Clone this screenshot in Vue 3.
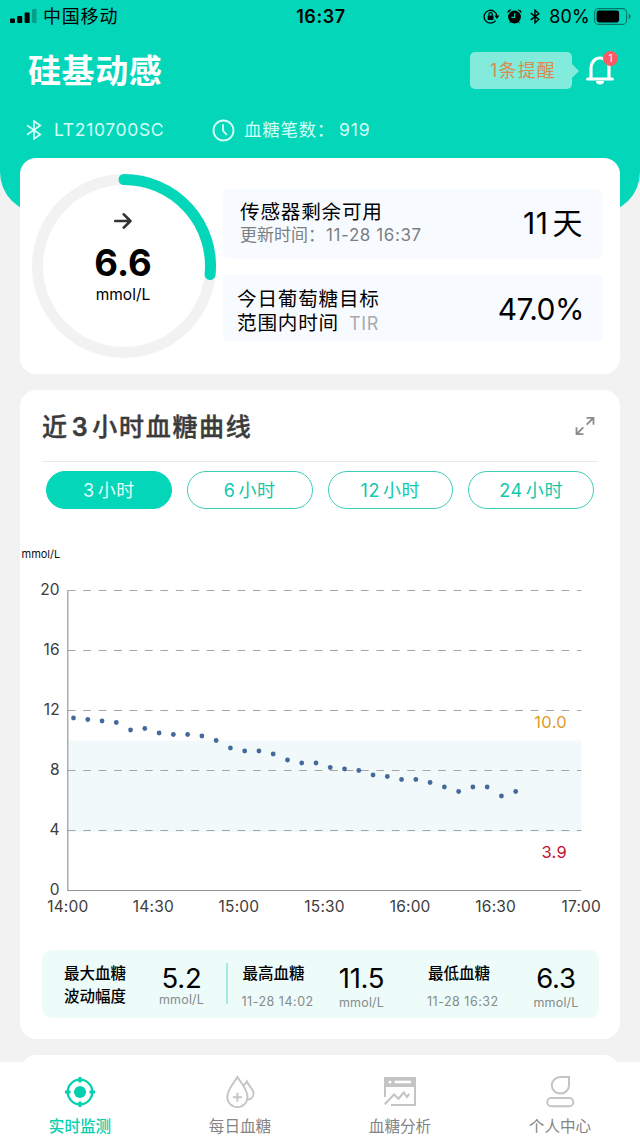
<template>
    <div class="screen">
        <header class="header">
            <div class="status">
                <div class="carrier">
                    <svg width="27" height="14" viewBox="0 0 27 14">
                        <rect x="0" y="9.5" width="5" height="4.5" rx="1" />
                        <rect x="7.2" y="7" width="5" height="7" rx="1" />
                        <rect x="14.6" y="3.4" width="5" height="10.6" rx="1" />
                        <rect x="22" y="0" width="4.6" height="14" rx="1" opacity=".25" />
                    </svg>
                    <span>中国移动</span>
                </div>
                <div class="clock">16:37</div>
                <div class="indicators">
                    <svg class="lock" width="17" height="15" viewBox="0 0 17 15">
                        <path d="M12.6 11.6A6.4 6.4 0 1 1 13.9 7" fill="none" stroke="#000" stroke-width="1.3" />
                        <path d="M11.4 6.6h5l-2.5 3.4z" />
                        <rect x="4.7" y="6.5" width="5.8" height="4.4" rx=".6" />
                        <path d="M5.9 6.8V5.3a1.7 1.7 0 0 1 3.4 0v1.5" fill="none" stroke="#000" stroke-width="1.1" />
                    </svg>
                    <svg class="alarm" width="15" height="15" viewBox="0 0 15 15">
                        <circle cx="7.5" cy="8" r="6.4" />
                        <path d="M.6 4.3A3 3 0 0 1 4.5.7zM14.4 4.3A3 3 0 0 0 10.5.7zM1.8 14.8l2-3h2zM13.2 14.8l-2-3h-2z" />
                        <path d="M7.7 4.2v4.1H4.3" fill="none" stroke="#04d6b9" stroke-width="1.2" />
                    </svg>
                    <svg class="bt" width="10" height="15" viewBox="0 0 10 15">
                        <path d="M.8 4.1l8 6.3L5 13.8V1.2l3.8 3.4-8 6.3" fill="none" stroke="#000" stroke-width="1.4" />
                    </svg>
                    <span class="percent">80%</span>
                    <svg width="38" height="17" viewBox="0 0 38 17">
                        <rect x=".6" y=".6" width="32" height="15.8" rx="4" fill="none" stroke="#000" stroke-opacity=".45" stroke-width="1.1" />
                        <rect x="2.6" y="2.6" width="22.5" height="11.8" rx="2.3" />
                        <path d="M34.7 5.8v5.4q2-.8 2-2.7t-2-2.7z" opacity=".45" />
                    </svg>
                </div>
            </div>
            <div class="brand-row">
                <h1 class="brand">硅基动感</h1>
                <div class="notice">
                    <span class="bubble">1条提醒</span>
                    <div class="bell">
                        <svg width="28" height="31" viewBox="0 0 28 31">
                            <path d="M5 24V12.5a9 9.5 0 0 1 18 0V24" fill="none" stroke="#fff" stroke-width="3.2" />
                            <path d="M1.5 24h25" stroke="#fff" stroke-width="3" stroke-linecap="round" />
                            <path d="M10 26h8a4 3.6 0 0 1-8 0z" fill="#fff" />
                        </svg>
                        <span class="badge">1</span>
                    </div>
                </div>
            </div>
            <div class="device">
                <svg width="16" height="20" viewBox="0 0 16 20">
                    <path d="M1 5.2l13.3 9.3-6.3 4.5V1l6.3 4.5L1 14.8" fill="none" stroke="#d4fff8" stroke-width="1.7" />
                </svg>
                <span class="serial">LT210700SC</span>
                <svg width="23" height="23" viewBox="0 0 23 23">
                    <circle cx="11.5" cy="11.5" r="10" fill="none" stroke="#d4fff8" stroke-width="1.9" />
                    <path d="M11 5.3v6.4l3.8 4.3" fill="none" stroke="#d4fff8" stroke-width="1.8" />
                </svg>
                <span class="count">血糖笔数：<span class="num">919</span></span>
            </div>
        </header>

        <main class="content">
            <section class="card summary">
                <div class="gauge">
                    <svg width="184" height="184" viewBox="0 0 184 184">
                        <circle cx="92" cy="92" r="86.5" fill="none" stroke="#f2f2f2" stroke-width="11" />
                        <path :d="gaugeArc" fill="none" stroke="#04d6b9" stroke-width="11" stroke-linecap="round" />
                    </svg>
                    <div class="reading">
                        <svg width="18" height="16" viewBox="0 0 18 16">
                            <path d="M1.3 8h15M9.8 1.4L16.4 8l-6.6 6.6" fill="none" stroke="#333" stroke-width="2.7" stroke-linecap="round" stroke-linejoin="round" />
                        </svg>
                        <strong>6.6</strong>
                        <span>mmol/L</span>
                    </div>
                </div>
                <div class="tiles">
                    <div class="tile">
                        <div>
                            <p class="tile-title">传感器剩余可用</p>
                            <p class="tile-sub">更新时间：<span>11-28 16:37</span></p>
                        </div>
                        <div class="tile-value days">11<span>天</span></div>
                    </div>
                    <div class="tile target">
                        <div>
                            <p class="tile-title">今日葡萄糖目标</p>
                            <p class="tile-title">范围内时间<span class="tir">TIR</span></p>
                        </div>
                        <div class="tile-value">47.0%</div>
                    </div>
                </div>
            </section>

            <section class="card curve">
                <div class="curve-head">
                    <h2>近<span>{{ activeHours }}</span>小时血糖曲线</h2>
                    <svg width="20" height="20" viewBox="0 0 20 20">
                        <path d="M11.5 1.8h7v7M18.3 2l-6.6 6.6M1.5 11.2v7h7M1.7 18l6.6-6.6" fill="none" stroke="#8c8c8c" stroke-width="1.8" />
                    </svg>
                </div>
                <div class="ranges">
                    <button v-for="h in ranges" :key="h" :class="{ active: h === activeHours }" @click="activeHours = h">
                        <span>{{ h }}</span>小时
                    </button>
                </div>
                <svg class="chart" width="600" height="400" viewBox="0 0 600 400">
                    <text x="1.5" y="18" class="unit">mmol/L</text>
                    <rect :x="plot.left" :y="yOf(10)" :width="plot.right - plot.left" :height="yOf(3.9) - yOf(10)" fill="#f1f9fb" />
                    <g v-for="tick in yTicks" :key="tick">
                        <line v-if="tick" :x1="plot.left" :x2="plot.right" :y1="yOf(tick)" :y2="yOf(tick)" class="grid" />
                        <text :x="plot.left - 8" :y="yOf(tick) + 4.5" text-anchor="end" class="tick">{{ tick }}</text>
                    </g>
                    <path :d="`M${plot.left} ${plot.top}V${plot.bottom}H${plot.right}`" class="axis" />
                    <text v-for="(label, i) in xTicks" :key="label" :x="xOf(i * 30)" y="372" text-anchor="middle" class="tick">{{ label }}</text>
                    <circle v-for="(value, i) in readings" :key="i" :cx="xOf(2 + i * 5)" :cy="yOf(value)" r="2.4" fill="#446a9b" />
                    <text x="547" y="188" text-anchor="end" class="limit high">10.0</text>
                    <text x="547" y="318" text-anchor="end" class="limit low">3.9</text>
                </svg>
                <div class="stats">
                    <div class="stat range">
                        <div class="stat-name">最大血糖<br>波动幅度</div>
                        <div class="stat-value">5.2<small>mmol/L</small></div>
                    </div>
                    <div v-for="s in stats" :key="s.name" class="stat">
                        <div class="stat-name">{{ s.name }}<small>{{ s.time }}</small></div>
                        <div class="stat-value">{{ s.value }}<small>mmol/L</small></div>
                    </div>
                </div>
            </section>

            <section class="card next"></section>
        </main>

        <nav class="tabbar">
            <a class="current">
                <svg width="32" height="34" viewBox="0 0 32 34" fill="none" stroke="#04d0ae">
                    <circle cx="16" cy="17" r="12.3" stroke-width="2.3" />
                    <circle cx="16" cy="17" r="6" fill="#04d0ae" stroke="none" />
                    <path d="M16 2v5.5M16 26.5V32M1 17h5.5M25.5 17H31" stroke-width="3" />
                </svg>
                <span>实时监测</span>
            </a>
            <a>
                <svg width="32" height="34" viewBox="0 0 32 34" fill="none" stroke="#c4c4c4" stroke-width="1.9">
                    <path d="M13.4 2C10 8 3.3 14.5 3.3 22a10 10 0 0 0 20.2 0C23.5 14.5 17 8 13.4 2z" />
                    <path d="M19.5 10.5c1.5-1.3 2.5-2.5 3.3-4C24.8 11 29.5 14 29.5 18.5c0 3.6-2.5 6-5.8 6.3" />
                    <path d="M13.4 17.8v9M8.9 22.3h9" />
                </svg>
                <span>每日血糖</span>
            </a>
            <a>
                <svg width="32" height="34" viewBox="0 0 32 34" fill="none" stroke="#c4c4c4" stroke-width="2">
                    <path d="M0 2h32v10H0z" fill="#c4c4c4" stroke="none" />
                    <path d="M10.5 7H27" stroke="#fff" stroke-width="2.6" />
                    <circle cx="6" cy="7" r="1.5" fill="#fff" stroke="none" />
                    <path d="M1 11v11M31 11v19H7M.8 29.3l9.2-9.8 4.5 4.2 5.3-6.2 3 4.5 2.5-3" />
                </svg>
                <span>血糖分析</span>
            </a>
            <a>
                <svg width="32" height="34" viewBox="0 0 32 34" fill="none" stroke="#c4c4c4" stroke-width="2">
                    <path d="M25 2v8.3a8.6 8.3 0 1 1-8.6-8.3z" />
                    <rect x="3.3" y="23" width="26" height="8.3" rx="4.1" />
                </svg>
                <span>个人中心</span>
            </a>
        </nav>
    </div>
</template>
<script setup>
import { computed, ref } from 'vue';

const ranges = [3, 6, 12, 24]
const activeHours = ref(3)

// one reading every 5 minutes, the first at 14:02
const readings = [
    11.5, 11.4, 11.3, 11.2, 10.7, 10.8, 10.5, 10.4, 10.4, 10.3, 10.0,
    9.5, 9.3, 9.3, 9.1, 8.7, 8.5, 8.5, 8.2, 8.1, 8.0, 7.7, 7.6,
    7.4, 7.4, 7.2, 6.9, 6.6, 6.9, 6.9, 6.3, 6.6
]
const stats = [
    { name: '最高血糖', time: '11-28 14:02', value: '11.5' },
    { name: '最低血糖', time: '11-28 16:32', value: '6.3' }
]

const plot = { left: 47.8, right: 561.3, top: 50.5, bottom: 350.5 }
const yTicks = [20, 16, 12, 8, 4, 0]
const xTicks = ['14:00', '14:30', '15:00', '15:30', '16:00', '16:30', '17:00']
const yOf = (v) => plot.bottom - v * (plot.bottom - plot.top) / 20
const xOf = (minutes) => plot.left + minutes * (plot.right - plot.left) / 180

const gaugeArc = computed(() => {
    const angle = 95.6 * Math.PI / 180
    const x = 92 + 86.5 * Math.sin(angle)
    const y = 92 - 86.5 * Math.cos(angle)
    return `M92 5.5A86.5 86.5 0 0 1 ${x} ${y}`
})
</script>

<style>
body {
    margin: 0;
    background: #f2f2f2;
}
</style>
<style scoped>
.screen {
    width: 640px;
    height: 1138px;
    display: flex;
    flex-direction: column;
    overflow: hidden;
    background: #f2f2f2;
    color: #000;
    font-family: Inter, "Noto Sans CJK SC", sans-serif;
}

svg {
    display: block;
    flex: none;
}

h1,
h2,
p {
    margin: 0;
}

.header {
    height: 213px;
    flex: none;
    background: #04d6b9;
    border-radius: 0 0 41px 41px;
}

.status {
    display: grid;
    grid-template-columns: 1fr auto 1fr;
    align-items: center;
    height: 33px;
    padding: 0 8px 0 10px;
}

.carrier {
    display: flex;
    align-items: center;
    gap: 6px;
    font-size: 18px;
    line-height: 22px;
    letter-spacing: .8px;
}

.carrier svg {
    margin-top: -1px;
}

.clock {
    font-size: 18px;
    font-weight: 600;
    letter-spacing: .6px;
}

.indicators {
    display: flex;
    align-items: center;
    justify-content: flex-end;
}

.lock {
    margin-right: 7px;
}

.alarm {
    margin-right: 8px;
}

.bt {
    margin-right: 9px;
}

.percent {
    font-size: 18px;
    letter-spacing: .2px;
    margin-right: 4px;
}

.brand-row {
    display: flex;
    align-items: center;
    justify-content: space-between;
    height: 74px;
    padding: 0 26px 0 28px;
}

.brand {
    color: #fff;
    font-size: 33px;
    line-height: 40px;
    font-weight: 700;
    letter-spacing: .6px;
    margin-top: 1px;
}

.notice {
    display: flex;
    align-items: center;
    gap: 14px;
}

.bubble {
    position: relative;
    width: 102px;
    height: 37px;
    line-height: 38px;
    text-align: center;
    border-radius: 5px;
    background: #82ebdc;
    color: #da8c50;
    font-size: 18px;
    letter-spacing: 1.2px;
    text-indent: 4px;
}

.bubble::after {
    content: "";
    position: absolute;
    left: 100%;
    top: 12px;
    border: 7px solid transparent;
    border-left-color: #82ebdc;
    border-right: 0;
}

.bell {
    position: relative;
}

.badge {
    position: absolute;
    top: -4px;
    right: -4px;
    width: 15px;
    height: 15px;
    border-radius: 50%;
    background: #fd5b62;
    color: #fff;
    font-size: 10px;
    line-height: 15px;
    text-align: center;
}

.device {
    display: flex;
    align-items: center;
    height: 46px;
    padding-left: 26px;
    color: #d4fff8;
    font-size: 17.5px;
    line-height: 24px;
}

.serial {
    width: 158px;
    margin-left: 12px;
    letter-spacing: .65px;
}

.count {
    margin-left: 9px;
    letter-spacing: .7px;
}

.num {
    margin-left: 4px;
    letter-spacing: .9px;
}

.content {
    flex: 1;
    min-height: 0;
    margin-top: -55px;
    padding: 0 20px;
    overflow: hidden;
    position: relative;
}

.card {
    background: #fff;
    border-radius: 16px;
    margin-bottom: 15.5px;
}

.summary {
    display: flex;
    height: 216px;
}

.gauge {
    display: grid;
    align-self: flex-start;
    margin: 15.5px 0 0 12px;
}

.gauge > * {
    grid-area: 1 / 1;
}

.reading {
    display: flex;
    flex-direction: column;
    align-items: center;
    padding: 39px 2px 0 0;
}

.reading strong {
    font-size: 36.5px;
    line-height: 44px;
    margin-top: 12px;
    font-weight: 700;
}

.reading span {
    font-size: 15.5px;
    line-height: 19px;
}

.tiles {
    flex: 1;
    padding: 31px 17px 0 7px;
}

.tile {
    display: flex;
    align-items: center;
    justify-content: space-between;
    height: 68.5px;
    padding: 0 20px 0 17px;
    border-radius: 6px;
    background: #f7fbff;
    margin-bottom: 16px;
    box-sizing: border-box;
}

.target {
    padding: 8px 19px 0 14px;
}

.tile-title {
    font-size: 19.6px;
    line-height: 24.5px;
    letter-spacing: .8px;
}

.tile-sub {
    font-size: 17px;
    line-height: 23px;
    color: #7c7f82;
}

.tile-sub span {
    letter-spacing: .6px;
    margin-left: 1px;
}

.tir {
    margin-left: 10px;
    color: #a9abad;
    font-size: 18px;
    letter-spacing: .7px;
}

.tile-value {
    font-size: 30px;
    line-height: 36px;
    letter-spacing: -.5px;
}

.target .tile-value {
    margin-top: -5px;
}

.days {
    letter-spacing: .5px;
}

.days span {
    margin-left: 4px;
}

.curve {
    height: 649.5px;
    display: flex;
    flex-direction: column;
}

.curve-head {
    display: flex;
    align-items: center;
    justify-content: space-between;
    height: 69px;
    margin: 0 22px;
    padding: 2px 3px 0 0;
    border-bottom: 1px solid #eaeaea;
}

h2 {
    font-size: 25px;
    line-height: 36px;
    font-weight: 500;
    letter-spacing: 1.7px;
    color: #3b3b3b;
    -webkit-text-stroke: .4px #3b3b3b;
    margin-top: 1px;
}

h2 span {
    margin: 0 3px;
    font-weight: 600;
}

.ranges {
    display: flex;
    gap: 15px;
    padding: 9.5px 26px 0;
}

.ranges button {
    flex: 1;
    height: 38px;
    padding: 0 0 2px;
    border: 1px solid #3fcdb8;
    border-radius: 19px;
    background: #fff;
    color: #10c8aa;
    font: inherit;
    font-size: 18px;
    letter-spacing: .6px;
}

.ranges button.active {
    background: #04d6b9;
    border-color: #04d6b9;
    color: #e2fffa;
}

.ranges span {
    margin-right: 3px;
}

.chart {
    margin-top: 31px;
}

.unit {
    font-size: 11px;
    fill: #111;
}

.tick {
    font-size: 15.5px;
    letter-spacing: .2px;
    fill: #3c3c3c;
}

.grid {
    stroke: #a3a6a7;
    stroke-width: 1.1;
    stroke-dasharray: 7.7 7.73;
}

.axis {
    fill: none;
    stroke: #8f9193;
    stroke-width: 1.1;
}

.limit {
    font-size: 16.5px;
    letter-spacing: .3px;
}

.high {
    fill: #e09a2b;
}

.low {
    fill: #c41230;
}

.stats {
    display: flex;
    height: 68px;
    margin: 9.5px 21.5px 0 22px;
    border-radius: 9px;
    background: #edfbf9;
}

.stat {
    display: flex;
    width: 186px;
    padding-top: 12.5px;
    box-sizing: border-box;
}

.stat small {
    display: block;
    color: #868b8c;
    font-size: 12.5px;
    line-height: 16px;
    font-weight: 400;
    letter-spacing: .2px;
}

.stat-name {
    width: 102px;
    padding-left: 15px;
    box-sizing: border-box;
    font-size: 15.5px;
    line-height: 23px;
    font-weight: 500;
    white-space: nowrap;
}

.stat:last-child .stat-name {
    width: 111px;
}

.stat-name small {
    margin: 9px 0 0 -1px;
    letter-spacing: .5px;
}

.stat-value {
    width: 64px;
    font-size: 27.5px;
    line-height: 32px;
    letter-spacing: -.3px;
    text-align: center;
}

.stat-value small {
    margin-top: 1px;
}

.range {
    position: relative;
}

.range .stat-name {
    padding-left: 22px;
    width: 107.5px;
}

.range .stat-value small {
    margin-top: -2px;
}

.range::after {
    content: "";
    position: absolute;
    right: 0;
    top: 13px;
    width: 1.5px;
    height: 41px;
    background: #a5ebe4;
}

.next {
    height: 60px;
}

.tabbar {
    display: flex;
    flex: none;
    height: 76px;
    background: #fff;
}

.tabbar a {
    flex: 1;
    display: flex;
    flex-direction: column;
    align-items: center;
    padding-top: 13px;
    font-size: 15.6px;
    line-height: 24px;
    color: #858585;
}

.tabbar span {
    margin-top: 6px;
}

.tabbar .current {
    color: #04d0ae;
    font-weight: 500;
}
</style>
